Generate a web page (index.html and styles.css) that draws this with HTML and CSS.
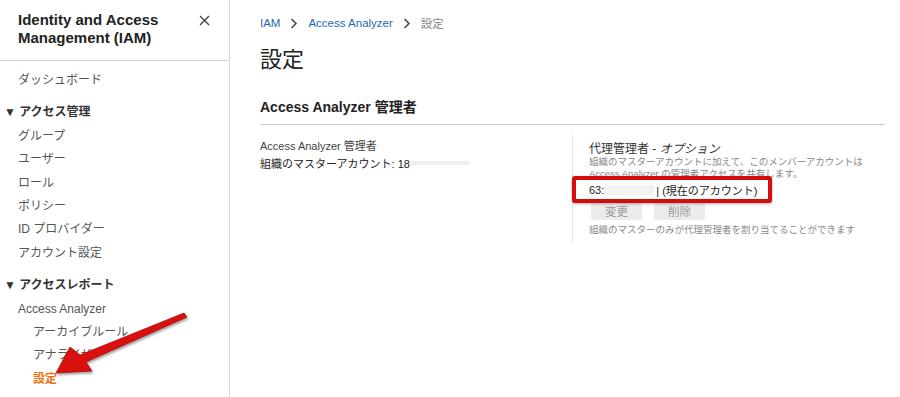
FILE: index.html
```html
<!DOCTYPE html>
<html lang="ja">
<head>
    <meta charset="UTF-8">
    <title>設定 - IAM</title>
    <link rel="stylesheet" href="styles.css">
</head>
<body>
    <div class="page">
        <nav class="sidebar">
            <div class="sidebar-header">
                <h2>Identity and Access Management (IAM)</h2>
                <svg class="close" width="11" height="11" viewBox="0 0 11 11">
                    <path d="M1 1 L10 10 M10 1 L1 10" stroke="#444" stroke-width="1.4"/>
                </svg>
            </div>
            <ul class="nav">
                <li class="item">ダッシュボード</li>
                <li class="group">&#9660; アクセス管理</li>
                <li class="item">グループ</li>
                <li class="item">ユーザー</li>
                <li class="item">ロール</li>
                <li class="item">ポリシー</li>
                <li class="item">ID プロバイダー</li>
                <li class="item">アカウント設定</li>
                <li class="group">&#9660; アクセスレポート</li>
                <li class="item">Access Analyzer</li>
                <li class="item sub">アーカイブルール</li>
                <li class="item sub">アナライザー</li>
                <li class="item sub active">設定</li>
            </ul>
        </nav>

        <main class="content">
            <div class="breadcrumb">
                <a>IAM</a>
                <svg class="sep" width="8" height="11" viewBox="0 0 8 11"><path d="M1.5 1 L6 5.5 L1.5 10" fill="none" stroke="#444" stroke-width="1.5"/></svg>
                <a>Access Analyzer</a>
                <svg class="sep" width="8" height="11" viewBox="0 0 8 11"><path d="M1.5 1 L6 5.5 L1.5 10" fill="none" stroke="#444" stroke-width="1.5"/></svg>
                <span class="current">設定</span>
            </div>
            <h1>設定</h1>
            <h3 class="section-title">Access Analyzer 管理者</h3>
            <div class="columns">
                <div class="col-left">
                    <div class="label">Access Analyzer 管理者</div>
                    <div class="value">組織のマスターアカウント: 18<span class="blur"></span></div>
                </div>
                <div class="col-right">
                    <div class="delegate-title">代理管理者 - <em>オプション</em></div>
                    <div class="hint">組織のマスターアカウントに加えて、このメンバーアカウントは<br>Access Analyzer の管理者アクセスを共有します。</div>
                    <div class="account-box">63:<span class="blur short"></span>| (現在のアカウント)</div>
                    <div class="buttons">
                        <button>変更</button>
                        <button>削除</button>
                    </div>
                    <div class="hint">組織のマスターのみが代理管理者を割り当てることができます</div>
                </div>
            </div>
        </main>
    </div>

    <svg class="arrow" width="200" height="97" viewBox="0 0 200 97">
        <path d="M184 13 L187 17 L86 62 L92 71 L56 73 L70 47 L80 55 Z" fill="#d8100f" stroke="#b40a0a" stroke-width="0.8" stroke-linejoin="round"/>
    </svg>
</body>
</html>
```

FILE: styles.css
```css
body {
    margin: 0;
    font-family: "Liberation Sans", "Noto Sans CJK JP", Arial, sans-serif;
    color: #333;
    background: #fff;
}
.page {
    display: flex;
    height: 397px;
    overflow: hidden;
}
.sidebar {
    width: 229px;
    flex-shrink: 0;
    border-right: 1px solid #ddd;
}
.sidebar-header {
    display: flex;
    justify-content: space-between;
    padding: 11px 19px 13px 18px;
    border-bottom: 1px solid #d5d5d5;
}
.sidebar-header h2 {
    margin: 0;
    font-size: 15px;
    line-height: 18px;
    font-weight: bold;
    color: #222;
    width: 150px;
}
.close {
    margin-top: 4px;
}
.nav {
    list-style: none;
    margin: 0;
    padding: 8px 0 0 0;
    font-size: 12px;
}
.nav li {
    height: 23.4px;
    line-height: 23.4px;
}
.nav .item {
    padding-left: 18px;
    color: #555;
}
.nav .item.sub {
    padding-left: 33px;
}
.nav .item.active {
    color: #ec7211;
    font-weight: bold;
}
.nav .group {
    padding-left: 4px;
    font-weight: bold;
    color: #333;
    margin-top: 9px;
}
.content {
    flex: 1;
    padding: 0 15px 0 30px;
}
.breadcrumb {
    margin-top: 15px;
    font-size: 11.5px;
    color: #1f68b6;
    display: flex;
    align-items: center;
}
.breadcrumb .sep {
    margin: 0 10px;
}
.breadcrumb .current {
    color: #888;
}
h1 {
    margin: 10px 0 0 0;
    font-size: 22px;
    font-weight: normal;
    color: #222;
}
.section-title {
    margin: 23px 0 0 0;
    padding-bottom: 8px;
    font-size: 14px;
    color: #222;
    border-bottom: 1px solid #ccc;
}
.columns {
    display: flex;
    padding-top: 10px;
}
.col-left {
    width: 312px;
    font-size: 11px;
    padding-top: 2px;
}
.col-left .label {
    color: #444;
}
.col-left .value {
    margin-top: 2px;
    color: #222;
    display: flex;
    align-items: center;
}
.blur {
    display: inline-block;
    width: 60px;
    height: 4px;
    background: #eee;
}
.col-right {
    border-left: 1px solid #e2e2e2;
    padding: 4px 0 6px 0;
}
.delegate-title {
    padding-left: 16px;
    font-size: 12px;
    color: #333;
}
.delegate-title em {
    font-style: italic;
}
.hint {
    padding-left: 16px;
    font-size: 9.5px;
    line-height: 12px;
    color: #888;
}
.account-box {
    margin-top: -4px;
    width: 179px;
    height: 19px;
    border: 4px solid #d30c0c;
    border-radius: 3px;
    box-shadow: 0 1px 3px rgba(0,0,0,0.3);
    background: #fff;
    font-size: 11px;
    padding-left: 13px;
    color: #222;
    display: flex;
    align-items: center;
    position: relative;
    left: -1px;
}
.account-box .short {
    width: 50px;
    height: 10px;
    background: #f2f2f2;
    margin-right: 2px;
}
.buttons {
    padding-left: 18px;
    margin-top: -1px;
    display: flex;
    gap: 12px;
    margin-bottom: 4px;
}
button {
    width: 51px;
    height: 18px;
    border: none;
    border-radius: 2px;
    background: #ececec;
    color: #999;
    font-size: 11.5px;
    font-family: inherit;
    padding: 0;
}
.arrow {
    position: absolute;
    left: 0;
    top: 300px;
    filter: drop-shadow(1px 2px 1px rgba(0,0,0,0.35));
}
```
